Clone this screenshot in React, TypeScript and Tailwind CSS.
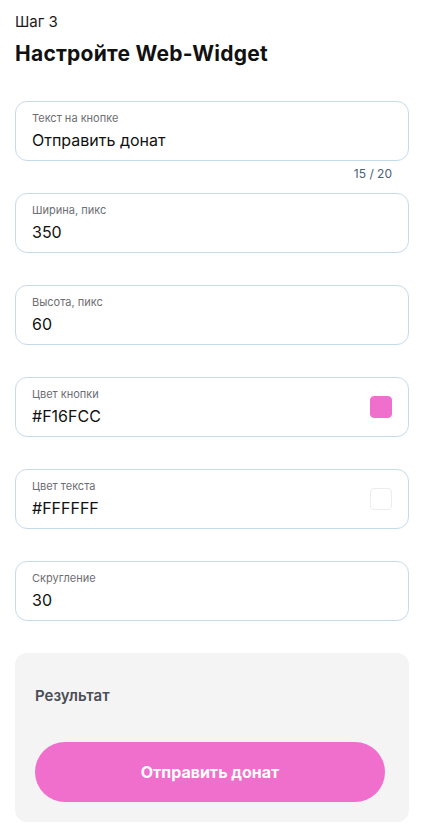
const fields = [
  { label: 'Текст на кнопке', value: 'Отправить донат', counter: '15 / 20' },
  { label: 'Ширина, пикс', value: '350' },
  { label: 'Высота, пикс', value: '60' },
  { label: 'Цвет кнопки', value: '#F16FCC', swatch: 'bg-[#f16fcc] border-[#f16fcc]' },
  { label: 'Цвет текста', value: '#FFFFFF', swatch: 'bg-white border-[#ececec]' },
  { label: 'Скругление', value: '30' },
]

export default function App() {
  return (
    <div className="min-h-[840px] bg-white px-[15px] pt-[12px] text-[#111] font-['Inter',sans-serif]">
      <div className="text-[15px] leading-[20px] text-[#1a1a1a]">Шаг 3</div>
      <h1 className="mt-[9px] text-[21px] leading-[26px] font-bold tracking-[0.25px]">
        Настройте Web-Widget
      </h1>

      {/* form fields */}
      <div className="mt-[34px] flex flex-col">
        {fields.map((f, i) => (
          <div key={f.label} className={i === 0 ? '' : i === 1 ? 'mt-[12px]' : 'mt-[32px]'}>
            <div className="h-[60px] rounded-[12px] border border-[#c6dbea] flex items-center px-[16px]">
              <div className="flex-1 flex flex-col -mt-[1px]">
                <span className="text-[11px] leading-[14px] text-[#6e6e73]">{f.label}</span>
                <span className="mt-[5px] text-[16px] leading-[20px] text-[#111]">{f.value}</span>
              </div>
              {f.swatch && (
                <div className={`w-[22px] h-[22px] rounded-[4px] border ${f.swatch}`} />
              )}
            </div>
            {f.counter && (
              <div className="mt-[6px] pr-[17px] text-right text-[12px] leading-[14px] text-[#49607a]">
                {f.counter}
              </div>
            )}
          </div>
        ))}
      </div>

      {/* preview */}
      <div className="mt-[32px] rounded-[12px] bg-[#f4f4f4] px-[20px] pt-[33px] pb-[20px]">
        <div className="text-[15px] leading-[20px] font-semibold text-[#4a4d55]">Результат</div>
        <button className="mt-[36px] w-[350px] h-[60px] rounded-[30px] bg-[#f16fcc] text-white text-[16px] font-bold">
          Отправить донат
        </button>
      </div>
    </div>
  )
}
